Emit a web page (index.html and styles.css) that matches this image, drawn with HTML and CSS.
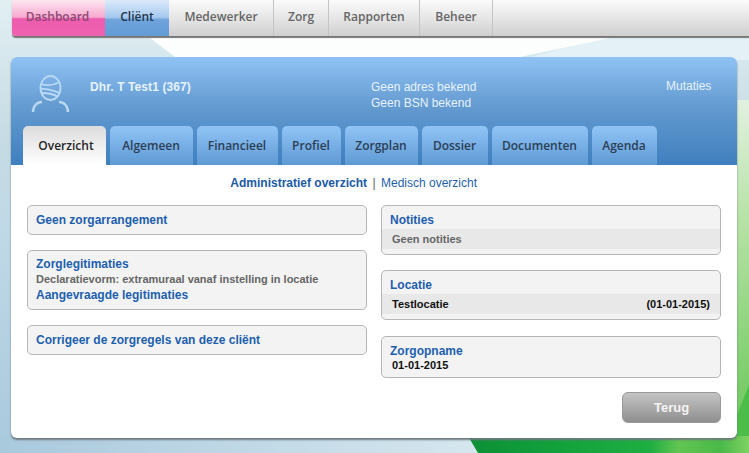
FILE: index.html
```html
<!DOCTYPE html>
<html lang="nl">
  <head>
    <meta charset="UTF-8" />
    <title>Overzicht</title>
    <link rel="stylesheet" href="styles.css">
  </head>
  <body>
    <!-- achtergrond -->
    <svg class="wallpaper" viewBox="0 0 749 453" aria-hidden="true">
      <defs>
        <linearGradient id="lucht" x1="0" y1="0" x2="0" y2="1">
          <stop offset="0" stop-color="#e2f0f4" />
          <stop offset="0.3" stop-color="#c6dbe3" />
          <stop offset="0.5" stop-color="#c0d9e6" />
          <stop offset="1" stop-color="#a9c9dd" />
        </linearGradient>
        <linearGradient id="licht" x1="0" y1="0" x2="1" y2="0">
          <stop offset="0" stop-color="#a9c9dd" />
          <stop offset="1" stop-color="#d6e7ef" />
        </linearGradient>
        <linearGradient id="gras" x1="0" y1="0" x2="0" y2="1">
          <stop offset="0" stop-color="#e2f1e0" />
          <stop offset="0.35" stop-color="#b9e3a8" />
          <stop offset="1" stop-color="#6ac85a" />
        </linearGradient>
        <linearGradient id="blad" x1="0" y1="0" x2="1" y2="0">
          <stop offset="0" stop-color="#0d8f36" />
          <stop offset="0.3" stop-color="#12a03c" />
          <stop offset="0.65" stop-color="#1fae42" />
          <stop offset="0.75" stop-color="#62c552" />
          <stop offset="0.9" stop-color="#49b948" />
          <stop offset="1" stop-color="#7fd264" />
        </linearGradient>
      </defs>
      <rect width="749" height="453" fill="url(#lucht)" />
      <rect x="0" y="436" width="480" height="17" fill="url(#licht)" />
      <polygon points="600,38 749,38 749,60 520,60" fill="#e4f2f7" />
      <polygon points="150,38 610,38 520,57 175,57" fill="#fcfefe" />
      <rect x="737" y="100" width="12" height="330" fill="url(#gras)" />
      <polygon points="737,415 749,385 749,453 730,453" fill="#4dbd4a" />
      <polygon points="468,436 737,436 749,436 749,453 478,453" fill="url(#blad)" />
    </svg>

    <nav class="hoofdmenu">
      <a class="menu-item dashboard">Dashboard</a>
      <a class="menu-item actief">Cliënt</a>
      <a class="menu-item">Medewerker</a>
      <a class="menu-item">Zorg</a>
      <a class="menu-item">Rapporten</a>
      <a class="menu-item">Beheer</a>
    </nav>

    <main class="paneel">
      <header class="client-kop">
        <div class="client-info">
          <svg class="client-icoon" viewBox="0 0 40 40" fill="none" stroke="#b9d8f3" stroke-width="1.8" aria-hidden="true">
            <ellipse cx="20.5" cy="15" rx="10" ry="12" />
            <path d="M11 11 C17 13 24 12 30 9" />
            <path d="M11 16 C18 15 24 18 30 20" />
            <path d="M11 20 C17 20 24 21 28 24" />
            <path d="M3 39 C3 33 7 29 12 29" stroke-width="2.4" />
            <path d="M38 39 C38 33 34 29 29 29" stroke-width="2.4" />
          </svg>
          <strong class="client-naam">Dhr. T Test1 (367)</strong>
          <div class="client-adres">Geen adres bekend<br />Geen BSN bekend</div>
          <a class="client-mutaties">Mutaties</a>
        </div>
        <div class="tabs">
          <a class="tab tab-actief">Overzicht</a>
          <a class="tab">Algemeen</a>
          <a class="tab">Financieel</a>
          <a class="tab">Profiel</a>
          <a class="tab">Zorgplan</a>
          <a class="tab">Dossier</a>
          <a class="tab">Documenten</a>
          <a class="tab">Agenda</a>
        </div>
      </header>

      <section class="inhoud">
        <p class="subnav">
          <a class="sub-actief">Administratief overzicht</a>
          <span class="streep">|</span>
          <a>Medisch overzicht</a>
        </p>

        <div class="kolommen">
          <div class="kolom">
            <div class="kader"><a class="titel">Geen zorgarrangement</a></div>
            <div class="kader legitimaties">
              <a class="titel">Zorglegitimaties</a>
              <p class="regel">Declaratievorm: extramuraal vanaf instelling in locatie</p>
              <a class="titel">Aangevraagde legitimaties</a>
            </div>
            <div class="kader"><a class="titel">Corrigeer de zorgregels van deze cliënt</a></div>
          </div>

          <div class="kolom">
            <div class="kader">
              <a class="titel">Notities</a>
              <div class="balk leeg">Geen notities</div>
            </div>
            <div class="kader">
              <a class="titel">Locatie</a>
              <div class="balk"><span>Testlocatie</span><span>(01-01-2015)</span></div>
            </div>
            <div class="kader opname">
              <a class="titel">Zorgopname</a>
              <div class="datum">01-01-2015</div>
            </div>
          </div>
        </div>

        <div class="knoppen"><button class="terug">Terug</button></div>
      </section>
    </main>
  </body>
</html>
```

FILE: styles.css
```css
html {
  height: 100%;
  overflow: hidden;
}
body {
  margin: 0;
  height: 100%;
  position: relative;
  overflow: hidden;
  font-family: "Liberation Sans", Arial, sans-serif;
  font-size: 12px;
}
.wallpaper {
  position: absolute;
  left: 0;
  top: 0;
  width: 749px;
  height: 453px;
}

/* hoofdmenu */
.hoofdmenu {
  position: relative;
  display: flex;
  height: 36px;
  margin-left: 12px;
  border-bottom-left-radius: 4px;
  background: linear-gradient(#fbfbfb, #e6e6e6 50%, #cfcfcf);
  box-shadow: 0 2px 1px #777;
  font-family: "Open Sans", sans-serif;
  font-weight: 600;
  font-size: 12px;
}
.menu-item {
  display: flex;
  align-items: center;
  justify-content: center;
  box-sizing: border-box;
  height: 36px;
  padding-bottom: 3px;
  color: #666;
  border-right: 1px solid #c4c4c4;
}
.menu-item:nth-child(3) { width: 105px; }
.menu-item:nth-child(4) { width: 55px; }
.menu-item:nth-child(5) { width: 91px; }
.menu-item:nth-child(6) { width: 73px; }
.dashboard {
  width: 93px;
  padding-right: 2px;
  color: #8c4a72;
  border: 0;
  border-bottom-left-radius: 4px;
  background: linear-gradient(#fde6f0, #f7a9cf 48%, #ee5cae 52%, #ee62b0);
}
.actief {
  width: 64px;
  color: #22364e;
  border: 0;
  background: linear-gradient(#dceafa, #a5c9ee 48%, #6fa3da 55%, #639bd5);
}

/* paneel */
.paneel {
  position: relative;
  width: 726px;
  height: 381px;
  margin: 21px 0 0 11px;
  border-radius: 6px;
  background: #fff;
  box-shadow: 0 2px 2px #6f7a80;
}
.client-kop {
  height: 108px;
  border-radius: 6px 6px 0 0;
  background: linear-gradient(#90c2f5, #649bd0 45%, #3f7fbe);
}
.client-info {
  display: flex;
  align-items: flex-start;
  height: 69px;
  color: #e6f2fc;
  line-height: 16px;
}
.client-icoon {
  width: 40px;
  height: 40px;
  margin: 16px 0 0 19px;
  flex: none;
}
.client-naam {
  margin: 22px 0 0 20px;
  width: 281px;
  flex: none;
  letter-spacing: 0.1px;
}
.client-adres {
  margin-top: 22px;
  width: 295px;
  flex: none;
}
.client-mutaties {
  margin-top: 21px;
}

/* tabs */
.tabs {
  display: flex;
  gap: 4px;
  height: 39px;
  padding-left: 12px;
  font-family: "Open Sans", sans-serif;
  font-weight: 600;
  font-size: 12px;
}
.tab {
  display: flex;
  align-items: center;
  justify-content: center;
  box-sizing: border-box;
  padding-right: 1px;
  color: #2c3f55;
  border-radius: 5px 5px 0 0;
  background: linear-gradient(#90c4f6, #5f9ad4);
}
.tab:nth-child(1) { width: 83px; }
.tab:nth-child(2) { width: 83px; }
.tab:nth-child(3) { width: 81px; }
.tab:nth-child(4) { width: 59px; }
.tab:nth-child(5) { width: 73px; }
.tab:nth-child(6) { width: 66px; }
.tab:nth-child(7) { width: 96px; }
.tab:nth-child(8) { width: 65px; }
.tab-actief {
  padding: 0 0 0 3px;
  color: #262626;
  background: linear-gradient(#dcdcdc, #fff);
}

/* inhoud */
.inhoud {
  padding: 0 16px;
}
.subnav {
  display: grid;
  grid-template-columns: 340px 14px 340px;
  margin: 0;
  height: 40px;
  padding-top: 11px;
  box-sizing: border-box;
  line-height: 15px;
  color: #1f5fa8;
}
.sub-actief {
  text-align: right;
  font-weight: 700;
  color: #1a5aa6;
}
.streep {
  text-align: center;
  color: #555;
}
.kolommen {
  display: grid;
  grid-template-columns: 340px 340px;
  gap: 14px;
}
.kolom {
  display: flex;
  flex-direction: column;
  gap: 15px;
}
.kader {
  box-sizing: border-box;
  padding: 6px 8px;
  border: 1px solid #b5b5b5;
  border-radius: 5px;
  background: #f3f3f3;
  line-height: 16px;
}
.legitimaties {
  padding-top: 5px;
}
.titel {
  display: block;
  font-weight: 700;
  color: #1d5fae;
}
.regel {
  margin: 0;
  font-size: 11px;
  font-weight: 700;
  line-height: 15px;
  color: #666;
}
.balk {
  display: flex;
  justify-content: space-between;
  height: 20px;
  margin: 1px -8px -1px;
  padding: 0 10px;
  background: #e8e8e8;
  font-size: 11px;
  font-weight: 700;
  line-height: 20px;
  color: #111;
}
.leeg {
  color: #666;
}
.opname {
  height: 42px;
  margin-top: 1px;
}
.datum {
  padding-left: 2px;
  font-size: 11px;
  font-weight: 700;
  line-height: 13px;
  color: #111;
}
.knoppen {
  display: flex;
  justify-content: flex-end;
  margin-top: 14px;
}
.terug {
  width: 99px;
  height: 31px;
  padding: 0;
  border: 1px solid #999;
  border-radius: 6px;
  background: linear-gradient(#c4c4c4, #8f8f8f);
  color: #f4f4f4;
  font-family: "Liberation Sans", Arial, sans-serif;
  font-size: 13px;
  font-weight: 700;
}
```
